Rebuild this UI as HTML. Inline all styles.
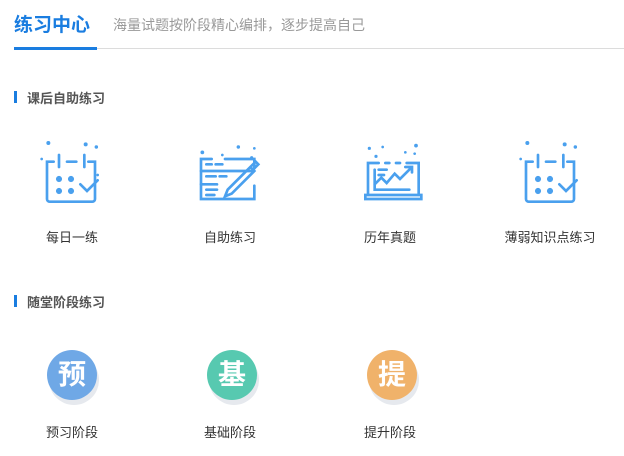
<!DOCTYPE html>
<html><head><meta charset="utf-8"><style>
*{margin:0;padding:0;box-sizing:border-box}
body{width:624px;height:456px;background:#fff;font-family:"Liberation Sans","Noto Sans CJK SC",sans-serif;position:relative;overflow:hidden}
.a{position:absolute}
.t{left:14px;top:10px;font-size:19px;font-weight:bold;color:#1a7de0}
.sub{left:113px;top:15px;font-size:14px;color:#999}
.line{left:14px;right:0;top:48px;height:1px;background:#dcdcdc}
.ul{left:14px;top:47px;width:83px;height:3px;background:#1a7de0}
.bar{width:3px;height:12px;background:#1a7de0;left:14px}
.h{left:27px;font-size:13px;font-weight:bold;color:#555}
.lab{font-size:13px;color:#333;width:140px;text-align:center}
.ic{width:80px;height:80px}
.c{width:50px;height:50px;border-radius:50%;color:#fff;font-size:28px;font-weight:bold;text-align:center;line-height:50px;box-shadow:2px 5px 0 #e6e9ee}
</style></head><body>
<div class="a t">练习中心</div>
<div class="a sub">海量试题按阶段精心编排，逐步提高自己</div>
<div class="a line"></div><div class="a ul"></div>
<div class="a bar" style="top:91px"></div><div class="a h" style="top:88px">课后自助练习</div>

<svg class="a ic" style="left:35px;top:139px" viewBox="0 0 60 60" fill="none" stroke="#4aa0ee" stroke-width="2" stroke-linecap="round">
<path d="M14 17 h-5 v28 a2 2 0 0 0 2 2 h32 a2 2 0 0 0 2-2 v-28 h-5 M24 17 h7"/><path d="M18 12 v9 M37 12 v9 M47 27 l0 0"/>
<path d="M34 34 l5 5 l8 -8"/>
<g fill="#4aa0ee" stroke="none"><circle cx="18" cy="30" r="2.3"/><circle cx="27" cy="30" r="2.3"/><circle cx="18" cy="39" r="2.3"/><circle cx="27" cy="39" r="2.3"/><circle cx="10" cy="3" r="1.5"/><circle cx="38" cy="4" r="1.5"/><circle cx="46" cy="6" r="1.3"/><circle cx="5" cy="15" r="1"/></g></svg>
<div class="a lab" style="left:2px;top:227px">每日一练</div>

<svg class="a ic" style="left:193px;top:139px" viewBox="0 0 60 60" fill="none" stroke="#4aa0ee" stroke-width="2" stroke-linecap="round">
<path d="M14 15 h-8 v30 h40 v-10 M46 22 v-7 h-22"/><path d="M6 24 h38 M6 34 h12"/>
<path d="M10 19 h4 M17 19 h5 M10 28 h7 M20 28 h5 M10 38 h8 M10 42 h6"/>
<path d="M26 38 l-2 5 l5 -2 l17 -17 l-3 -3 z M44 20 l3 -3 l2 2 l-3 3"/>
<g fill="#4aa0ee" stroke="none"><circle cx="7" cy="10" r="1.4"/><circle cx="34" cy="6" r="1.3"/><circle cx="46" cy="7" r="1"/><circle cx="22" cy="12" r="1"/><circle cx="44" cy="14" r="1.2"/></g></svg>
<div class="a lab" style="left:160px;top:227px">自助练习</div>

<svg class="a ic" style="left:356px;top:139px" viewBox="0 0 60 60" fill="none" stroke="#4aa0ee" stroke-width="2" stroke-linecap="round">
<path d="M9 41 v-23 h8 M22 18 h3 M30 18 h3 M38 18 h9 v23"/><path d="M7 42 h42 v3 h-42 z"/>
<path d="M14 23 v15 h26 M17 23 h6 M17 27 h4 M14 34 l5 -5 l4 4 l6 -7 l4 4 l8 -8 M37 21 h5 v4"/>
<g fill="#4aa0ee" stroke="none"><circle cx="10" cy="7" r="1.2"/><circle cx="20" cy="6" r="1"/><circle cx="45" cy="5" r="1.4"/><circle cx="15" cy="13" r="1.2"/><circle cx="37" cy="10" r="1"/><circle cx="44" cy="11" r="1"/></g></svg>
<div class="a lab" style="left:320px;top:227px">历年真题</div>

<svg class="a ic" style="left:514px;top:139px" viewBox="0 0 60 60" fill="none" stroke="#4aa0ee" stroke-width="2" stroke-linecap="round">
<path d="M14 17 h-5 v28 a2 2 0 0 0 2 2 h32 a2 2 0 0 0 2-2 v-28 h-5 M24 17 h7"/><path d="M18 12 v9 M37 12 v9"/>
<path d="M34 34 l5 5 l8 -8"/>
<g fill="#4aa0ee" stroke="none"><circle cx="18" cy="30" r="2.3"/><circle cx="27" cy="30" r="2.3"/><circle cx="18" cy="39" r="2.3"/><circle cx="27" cy="39" r="2.3"/><circle cx="10" cy="3" r="1.5"/><circle cx="38" cy="4" r="1.5"/><circle cx="46" cy="6" r="1.3"/><circle cx="5" cy="15" r="1"/></g></svg>
<div class="a lab" style="left:480px;top:227px">薄弱知识点练习</div>

<div class="a bar" style="top:295px"></div><div class="a h" style="top:292px">随堂阶段练习</div>
<div class="a c" style="left:47px;top:350px;background:#6fa8e6">预</div>
<div class="a c" style="left:207px;top:350px;background:#57c9b0">基</div>
<div class="a c" style="left:367px;top:350px;background:#f0b26a">提</div>
<div class="a lab" style="left:2px;top:422px">预习阶段</div>
<div class="a lab" style="left:160px;top:422px">基础阶段</div>
<div class="a lab" style="left:320px;top:422px">提升阶段</div>
</body></html>
